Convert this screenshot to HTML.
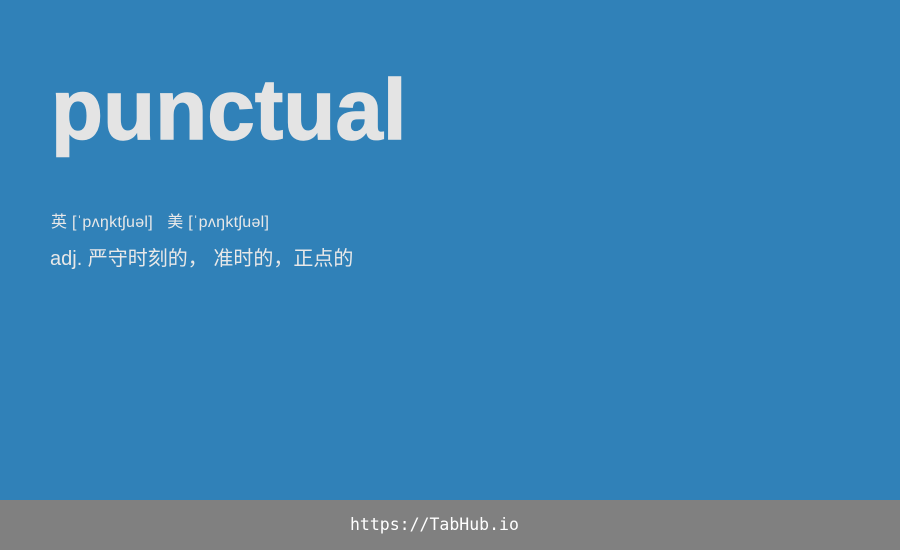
<!DOCTYPE html>
<html><head><meta charset="utf-8"><style>
html,body{margin:0;padding:0;width:900px;height:550px;overflow:hidden;background:#3081b8;}
.w{position:absolute;left:51px;top:68px;font:bold 85px/1 "Liberation Sans",Arial,sans-serif;color:#e4e4e4;-webkit-text-stroke:1.5px #e4e4e4;letter-spacing:0.2px;}
.p{position:absolute;left:51px;top:213px;font:16px/1.2 "Liberation Sans","Noto Sans CJK SC",sans-serif;color:#e8e8e8;white-space:pre;letter-spacing:0.3px;}
.d{position:absolute;left:50px;top:247px;font:20px/1.2 "Liberation Sans","Noto Sans CJK SC",sans-serif;color:#e8e8e8;white-space:pre;}
.f{position:absolute;left:350px;top:500px;height:50px;color:#fff;font:16.5px/50px "DejaVu Sans Mono","Liberation Mono",monospace;}
.fb{position:absolute;left:0;top:500px;width:900px;height:50px;background:#808080;}
</style></head><body>
<div class="w">punctual</div>
<div class="p">英 [ˈpʌŋktʃuəl]   美 [ˈpʌŋktʃuəl]</div>
<div class="d">adj. 严守时刻的， 准时的，正点的</div>
<div class="fb"></div>
<div class="f">https://TabHub.io</div>
</body></html>
